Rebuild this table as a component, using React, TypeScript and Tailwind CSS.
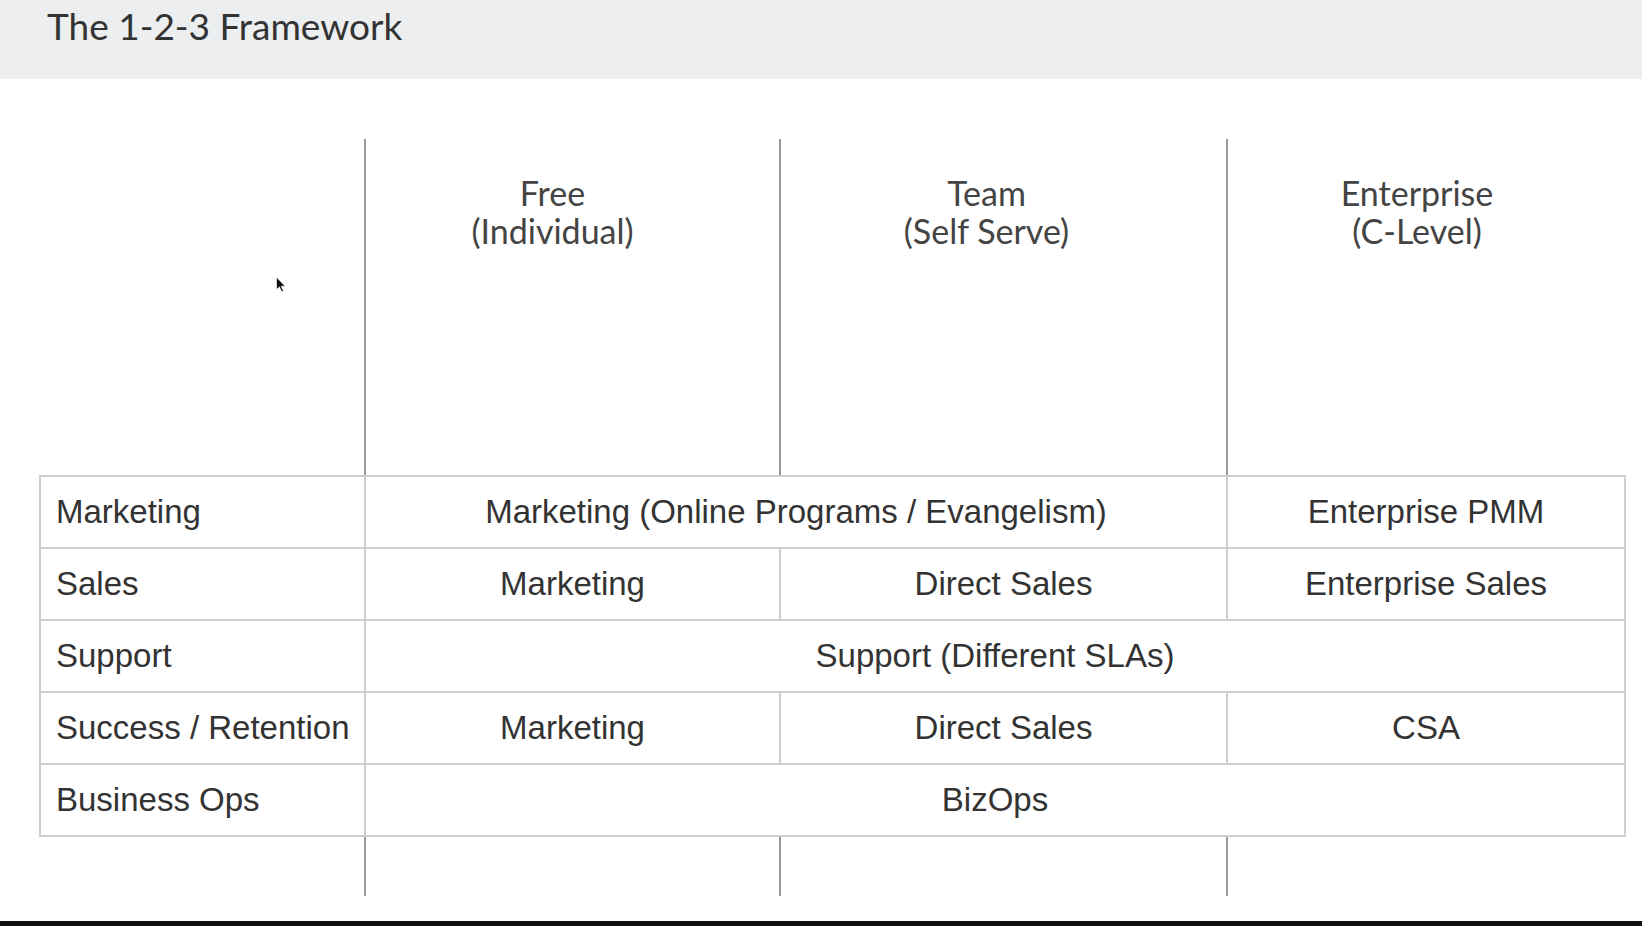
import React from 'react'

const lato = { fontFamily: 'Lato, "Open Sans", sans-serif' }

const line = 'border-r-2 border-[#9a9a9a]'
const cell = 'flex items-center justify-center border-r-2 border-b-2 border-[#cfcfcf] text-[#333]'

function Cursor() {
  return (
    <svg className="absolute left-[275px] top-[197px]" width="12" height="17" viewBox="0 0 10 15">
      <path d="M1 1 L1 12 L3.6 9.6 L5.6 14 L7.2 13.2 L5.3 9 L8.8 9 Z" fill="#111" stroke="#fff" strokeWidth="0.6" />
    </svg>
  )
}

export default function App() {
  const rows: { label: string; cells: { text: string; span: string }[] }[] = [
    { label: 'Marketing', cells: [
      { text: 'Marketing (Online Programs / Evangelism)', span: 'col-span-2' },
      { text: 'Enterprise PMM', span: '' },
    ] },
    { label: 'Sales', cells: [
      { text: 'Marketing', span: '' },
      { text: 'Direct Sales', span: '' },
      { text: 'Enterprise Sales', span: '' },
    ] },
    { label: 'Support', cells: [
      { text: 'Support (Different SLAs)', span: 'col-span-3' },
    ] },
    { label: 'Success / Retention', cells: [
      { text: 'Marketing', span: '' },
      { text: 'Direct Sales', span: '' },
      { text: 'CSA', span: '' },
    ] },
    { label: 'Business Ops', cells: [
      { text: 'BizOps', span: 'col-span-3' },
    ] },
  ]

  return (
    <div className="h-[926px] w-full flex flex-col bg-white overflow-hidden">
      {/* slide title */}
      <div className="h-[79px] shrink-0 bg-[#eceeef] pl-[47px] pt-[4px]">
        <h1 className="text-[37px] leading-[44px] text-[#333]" style={lato}>The 1-2-3 Framework</h1>
      </div>

      <div className="relative flex-1 pl-[39px] pt-[60px]">
        <Cursor />

        {/* column headers */}
        <div className="grid grid-cols-[325px_415px_447px_398px] h-[336px] border-l-2 border-transparent">
          <div className={line} />
          <div className={`${line} pt-[35px] pr-[40px] text-center text-[34px] leading-[38px] text-[#444]`} style={lato}>
            Free<br />(Individual)
          </div>
          <div className={`${line} pt-[35px] pr-[34px] text-center text-[34px] leading-[38px] text-[#444]`} style={lato}>
            Team<br />(Self Serve)
          </div>
          <div className="pt-[35px] pr-[20px] text-center text-[34px] leading-[38px] text-[#444]" style={lato}>
            Enterprise<br />(C-Level)
          </div>
        </div>

        {/* table */}
        <div
          className="grid grid-cols-[325px_415px_447px_398px] grid-rows-[repeat(5,72px)] w-fit border-t-2 border-l-2 border-[#cfcfcf] text-[33px]"
          style={{ fontFamily: '"Liberation Sans", Arial, sans-serif' }}
        >
          {rows.map(r => (
            <React.Fragment key={r.label}>
              <div className={`${cell} justify-start! pl-[15px]`}>{r.label}</div>
              {r.cells.map((c, i) => (
                <div key={i} className={`${cell} ${c.span}`}>{c.text}</div>
              ))}
            </React.Fragment>
          ))}
        </div>

        {/* lines continuing below */}
        <div className="grid grid-cols-[325px_415px_447px_398px] h-[59px] border-l-2 border-transparent">
          <div className={line} />
          <div className={line} />
          <div className={line} />
          <div />
        </div>
      </div>

      <div className="h-[5px] shrink-0 bg-[#111]" />
    </div>
  )
}
